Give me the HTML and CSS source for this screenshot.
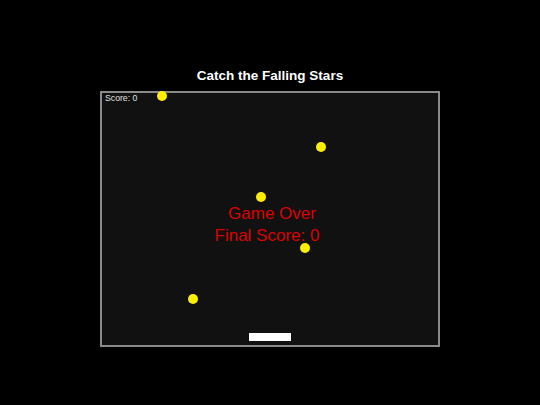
FILE: index.html
```html
<!DOCTYPE html>
<html lang="en">
<head>
    <meta charset="UTF-8">
    <meta name="viewport" content="width=device-width, initial-scale=1.0">
    <title>Catch the Falling Stars</title>
    <link rel="stylesheet" href="styles.css">
</head>
<body>
    <h1 class="title">Catch the Falling Stars</h1>
    <div class="board">
        <span class="score">Score: 0</span>
        <span class="star" style="left: 55px; top: -2px;"></span>
        <span class="star" style="left: 214px; top: 49px;"></span>
        <span class="star" style="left: 154px; top: 99px;"></span>
        <span class="star" style="left: 198px; top: 150px;"></span>
        <span class="star" style="left: 86px; top: 201px;"></span>
        <div class="gameover">
            <p class="over">Game Over</p>
            <p class="final">Final Score: 0</p>
        </div>
        <span class="paddle"></span>
    </div>
</body>
</html>
```

FILE: styles.css
```css
*{
    margin: 0;
    padding: 0;
    box-sizing: border-box;
}
body{
    background-color: black;
    color: white;
    font-family: "Liberation Sans", Arial, sans-serif;
    padding-top: 68px;
}
.title{
    text-align: center;
    font-size: 13.5px;
    line-height: 16px;
    font-weight: bold;
    margin-bottom: 7px;
}
.board{
    position: relative;
    width: 340px;
    height: 256px;
    margin-left: 100px;
    background-color: #111111;
    border: 2px solid #8a8a8a;
}
.score{
    position: absolute;
    left: 3px;
    top: 0;
    font-size: 8.7px;
    color: #e0e0e0;
}
.star{
    position: absolute;
    width: 10px;
    height: 10px;
    border-radius: 50%;
    background-color: #ffee00;
}
.gameover{
    position: absolute;
    top: 110px;
    left: 0;
    right: 0;
    text-align: center;
    color: #dd0000;
    font-size: 17px;
    line-height: 22px;
}
.over{
    padding-left: 4px;
}
.final{
    padding-right: 6px;
}
.paddle{
    position: absolute;
    left: 147px;
    top: 240px;
    width: 42px;
    height: 8px;
    background-color: white;
}
```
